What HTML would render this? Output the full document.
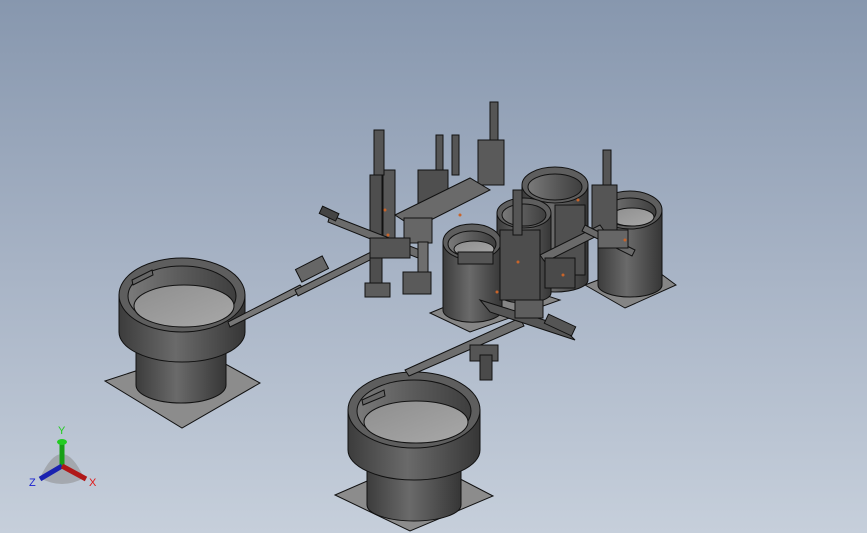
<!DOCTYPE html>
<html><head><meta charset="utf-8"><style>
html,body{margin:0;padding:0;width:867px;height:533px;overflow:hidden}
body{background:linear-gradient(180deg,#8797ae 0%,#a7b3c5 50%,#c6cfdb 100%)}
svg{position:absolute;left:0;top:0}
</style></head><body>
<svg width="867" height="533" viewBox="0 0 867 533" xmlns="http://www.w3.org/2000/svg">
<defs>
<linearGradient id="cyl" x1="0" x2="1" y1="0" y2="0">
<stop offset="0" stop-color="#3c3c3c"/><stop offset="0.45" stop-color="#6a6a6a"/><stop offset="1" stop-color="#363636"/></linearGradient>
<linearGradient id="inner" x1="0" x2="1"><stop offset="0" stop-color="#7a7a7a"/><stop offset="0.5" stop-color="#5a5a5a"/><stop offset="1" stop-color="#3e3e3e"/></linearGradient>
<linearGradient id="floor" x1="0" x2="1" y1="0" y2="1"><stop offset="0" stop-color="#8e8e8e"/><stop offset="1" stop-color="#a8a8a8"/></linearGradient>
</defs>
<g stroke="#111" stroke-width="1">
<!-- bowl 1 -->
<polygon points="105,381 200,350 260,383 182,428" fill="#8c8c8c"/>
<path d="M136,330 L136,385 A45,18 0 0 0 226,385 L226,330 Z" fill="url(#cyl)"/>
<path d="M119,295 L119,332 A63,30 0 0 0 245,332 L245,295 Z" fill="url(#cyl)"/>
<ellipse cx="182" cy="295" rx="63" ry="37" fill="#5e5e5e"/>
<ellipse cx="182" cy="296" rx="54" ry="30" fill="url(#inner)"/>
<ellipse cx="184" cy="306" rx="50" ry="21" fill="url(#floor)"/>
<polygon points="132,280 152,270 153,275 133,285" fill="#666"/>
<polygon points="228,322 300,285 305,290 230,327" fill="#777"/>
<!-- bowl 2 -->
<polygon points="335,495 420,458 493,496 410,531" fill="#8c8c8c"/>
<path d="M367,450 L367,505 A47,16 0 0 0 461,505 L461,450 Z" fill="url(#cyl)"/>
<path d="M348,410 L348,450 A66,30 0 0 0 480,450 L480,410 Z" fill="url(#cyl)"/>
<ellipse cx="414" cy="410" rx="66" ry="38" fill="#5e5e5e"/>
<ellipse cx="414" cy="411" rx="57" ry="31" fill="url(#inner)"/>
<ellipse cx="416" cy="422" rx="52" ry="21" fill="url(#floor)"/>
<polygon points="362,400 384,390 385,396 363,405" fill="#666"/>
<!-- plates for small bowls -->
<polygon points="430,313 505,282 560,300 470,332" fill="#858585"/>
<polygon points="585,285 645,262 676,285 625,308" fill="#858585"/>
<!-- bowl C -->
<path d="M522,185 L522,280 A33,12 0 0 0 588,280 L588,185 Z" fill="url(#cyl)"/>
<ellipse cx="555" cy="185" rx="33" ry="18" fill="#5e5e5e"/>
<ellipse cx="555" cy="187" rx="27" ry="13" fill="url(#inner)"/>
<!-- bowl D -->
<path d="M598,210 L598,285 A32,12 0 0 0 662,285 L662,210 Z" fill="url(#cyl)"/>
<ellipse cx="630" cy="210" rx="32" ry="19" fill="#5e5e5e"/>
<ellipse cx="630" cy="212" rx="26" ry="14" fill="url(#inner)"/>
<ellipse cx="632" cy="217" rx="22" ry="9" fill="url(#floor)"/>
<!-- bowl B -->
<path d="M497,213 L497,293 A27,10 0 0 0 551,293 L551,213 Z" fill="url(#cyl)"/>
<ellipse cx="524" cy="213" rx="27" ry="15" fill="#5e5e5e"/>
<ellipse cx="524" cy="215" rx="22" ry="11" fill="url(#inner)"/>
<!-- bowl A -->
<path d="M443,242 L443,310 A29,12 0 0 0 502,310 L502,242 Z" fill="url(#cyl)"/>
<ellipse cx="472" cy="242" rx="29" ry="18" fill="#5e5e5e"/>
<ellipse cx="472" cy="244" rx="24" ry="13" fill="url(#inner)"/>
<ellipse cx="474" cy="249" rx="20" ry="8" fill="url(#floor)"/>
<!-- tracks -->
<polygon points="295,290 395,240 398,246 298,296" fill="#6e6e6e"/>
<polygon points="405,370 520,318 524,326 409,376" fill="#6e6e6e"/>
<rect x="297" y="262" width="30" height="14" fill="#666" transform="rotate(-27 312 269)"/>
<rect x="470" y="345" width="28" height="16" fill="#555"/>
<rect x="480" y="355" width="12" height="25" fill="#4a4a4a"/>
<!-- machinery -->
<rect x="370" y="175" width="12" height="120" fill="#4e4e4e"/>
<rect x="383" y="170" width="12" height="85" fill="#585858"/>
<rect x="365" y="283" width="25" height="14" fill="#5c5c5c"/>
<rect x="374" y="130" width="10" height="45" fill="#555"/>
<rect x="436" y="135" width="7" height="40" fill="#555"/>
<rect x="452" y="135" width="7" height="40" fill="#555"/>
<rect x="490" y="102" width="8" height="40" fill="#555"/>
<rect x="478" y="140" width="26" height="45" fill="#5a5a5a"/>
<rect x="603" y="150" width="8" height="35" fill="#555"/>
<rect x="592" y="185" width="25" height="50" fill="#555"/>
<rect x="418" y="170" width="30" height="40" fill="#4f4f4f"/>
<polygon points="395,215 470,178 490,190 415,228" fill="#6a6a6a"/>
<polygon points="330,215 420,250 418,258 328,222" fill="#6b6b6b"/>
<rect x="404" y="218" width="28" height="25" fill="#666"/>
<rect x="418" y="242" width="10" height="30" fill="#6e6e6e"/>
<rect x="403" y="272" width="28" height="22" fill="#5a5a5a"/>
<rect x="370" y="238" width="40" height="20" fill="#555"/>
<rect x="500" y="230" width="40" height="70" fill="#4d4d4d"/>
<rect x="513" y="190" width="9" height="45" fill="#555"/>
<rect x="555" y="205" width="30" height="70" fill="#505050"/>
<polygon points="540,255 600,225 605,232 545,262" fill="#6a6a6a"/>
<polygon points="585,225 635,250 632,256 582,231" fill="#6a6a6a"/>
<rect x="598" y="230" width="30" height="18" fill="#666"/>
<polygon points="480,300 560,325 575,340 490,312" fill="#555"/>
<rect x="515" y="300" width="28" height="18" fill="#5e5e5e"/>
<rect x="545" y="320" width="30" height="10" fill="#555" transform="rotate(25 560 325)"/>
<rect x="320" y="210" width="18" height="8" fill="#444" transform="rotate(25 330 214)"/>
<rect x="458" y="252" width="35" height="12" fill="#555"/>
<rect x="545" y="258" width="30" height="30" fill="#4a4a4a"/>
</g>
<!-- orange accents -->
<g fill="#c8642a">
<circle cx="385" cy="210" r="1.5"/><circle cx="388" cy="235" r="1.5"/><circle cx="460" cy="215" r="1.5"/>
<circle cx="518" cy="262" r="1.5"/><circle cx="563" cy="275" r="1.5"/><circle cx="625" cy="240" r="1.5"/>
<circle cx="578" cy="200" r="1.5"/><circle cx="497" cy="292" r="1.5"/>
</g>
<!-- triad -->
<g>
<path d="M40,478 Q62,430 84,478 Q62,490 40,478Z" fill="#888" opacity="0.5"/>
<line x1="62" y1="466" x2="62" y2="443" stroke="#17a017" stroke-width="5"/>
<ellipse cx="62" cy="442" rx="5" ry="3" fill="#22cc22"/>
<line x1="62" y1="466" x2="40" y2="479" stroke="#1a22b0" stroke-width="5"/>
<line x1="62" y1="466" x2="86" y2="479" stroke="#b01818" stroke-width="5"/>
<text x="58" y="434" font-family="Liberation Sans,sans-serif" font-size="11" fill="#22cc22">Y</text>
<text x="29" y="486" font-family="Liberation Sans,sans-serif" font-size="11" fill="#1a22d0">Z</text>
<text x="89" y="486" font-family="Liberation Sans,sans-serif" font-size="11" fill="#e01818">X</text>
</g>
</svg>
</body></html>
